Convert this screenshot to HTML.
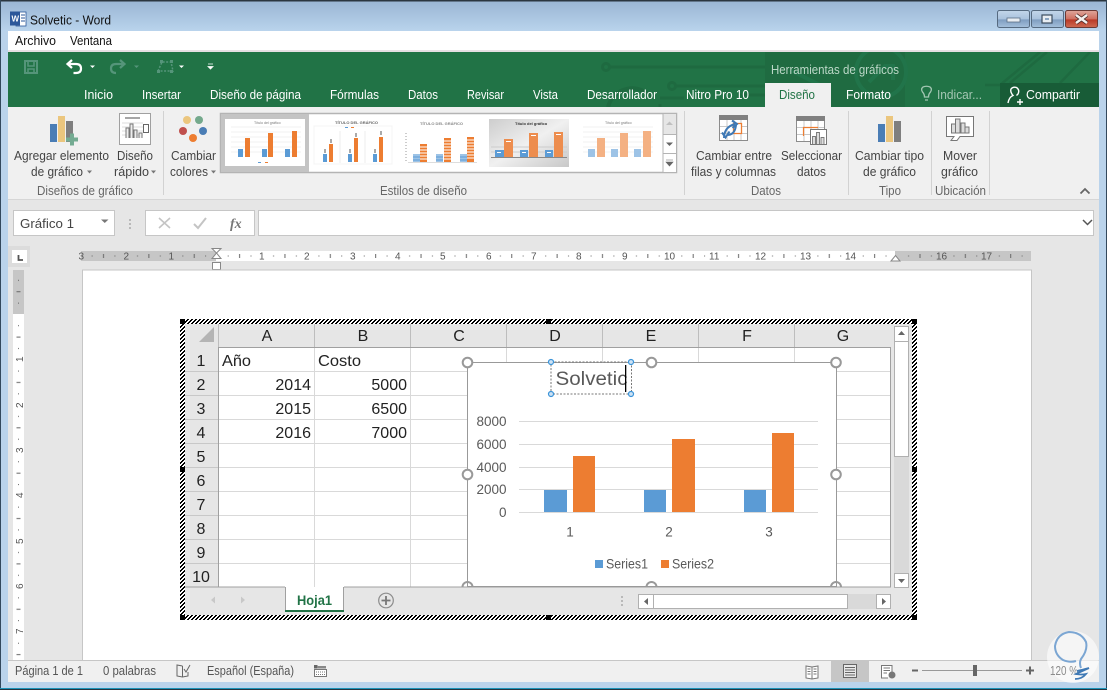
<!DOCTYPE html>
<html><head><meta charset="utf-8"><title>Solvetic - Word</title>
<style>
html,body{margin:0;padding:0;width:1107px;height:690px;overflow:hidden;background:#fff}
svg{display:block;font-family:"Liberation Sans",sans-serif}
text{font-size:12.5px;fill:#444}
.w text,text.w{fill:#fff}
.c{font-size:16px;fill:#222}
.a{font-size:13.5px;fill:#595959}
.g{fill:#666}
.t{font-size:3.6px;fill:#777}
.r{font-size:10px;fill:#555}
</style></head><body>
<svg width="1107" height="690" viewBox="0 0 1107 690" xmlns="http://www.w3.org/2000/svg">
<defs>
<linearGradient id="tb" x1="0" y1="0" x2="0" y2="1"><stop offset="0" stop-color="#99b5d3"/><stop offset="1" stop-color="#b9d3ec"/></linearGradient>
<linearGradient id="btn" x1="0" y1="0" x2="0" y2="1"><stop offset="0" stop-color="#c3d6ea"/><stop offset=".5" stop-color="#a9c2dd"/><stop offset=".55" stop-color="#7f9dc0"/><stop offset="1" stop-color="#a5c0dc"/></linearGradient>
<linearGradient id="cl" x1="0" y1="0" x2="0" y2="1"><stop offset="0" stop-color="#dfa79c"/><stop offset=".5" stop-color="#cf6f60"/><stop offset=".55" stop-color="#b93a27"/><stop offset="1" stop-color="#cf6b52"/></linearGradient>
<linearGradient id="th4" x1="0" y1="0" x2="1" y2="1"><stop offset="0" stop-color="#cdcdcd"/><stop offset=".5" stop-color="#f0f0f0"/><stop offset="1" stop-color="#c8c8c8"/></linearGradient>
<clipPath id="gc"><rect x="8" y="52" width="1091" height="55"/></clipPath>
<pattern id="h" width="4" height="4" patternUnits="userSpaceOnUse"><rect width="4" height="4" fill="#fff"/><path d="M2 0h2v1h-2zM1 1h2v1h-2zM0 2h2v1h-2zM3 3h1v1h-1zM0 3h1v1h-1z" fill="#000"/></pattern>
<pattern id="rh" x="216.5" y="251" width="45.36" height="10" patternUnits="userSpaceOnUse"><rect x="11.2" y="4.5" width="1" height="1" fill="#666"/><rect x="34" y="4.5" width="1" height="1" fill="#666"/><rect x="22.6" y="3" width="1" height="4" fill="#666"/></pattern>
<pattern id="rv" x="13" y="314" width="11" height="45.36" patternUnits="userSpaceOnUse"><rect x="5" y="11.2" width="1" height="1" fill="#666"/><rect x="5" y="34" width="1" height="1" fill="#666"/><rect x="3.5" y="22.6" width="4" height="1" fill="#666"/></pattern>
<g id="mini"><rect x="0" y="0" width="80" height="47" fill="#fff"/><path d="M6 8H76M6 13H76M6 18H76M6 23H76M6 28H76M6 33H76" stroke="#eee" stroke-width=".7"/></g>
</defs>

<!-- frame -->
<rect width="1107" height="690" fill="#bad3eb"/>
<rect width="1107" height="31" fill="url(#tb)"/>
<rect width="1107" height="1.5" fill="#2b3640"/>
<rect x="0" y="0" width="1" height="690" fill="#33485c"/>
<rect x="1106" y="0" width="1" height="690" fill="#33485c"/>
<rect x="0" y="688" width="1107" height="1" fill="#1b93b8"/>
<rect x="0" y="689" width="1107" height="1" fill="#26343f"/>
<rect x="8" y="31" width="1091" height="20" fill="#fff"/>
<rect x="8" y="50" width="1091" height="2" fill="#e6dfe3"/>

<!-- title -->
<rect x="16" y="12" width="10" height="14" fill="#fff" stroke="#2b579a" stroke-width=".8"/>
<rect x="10" y="11.5" width="10" height="14" fill="#2b579a"/>
<text x="11.5" y="21.5" style="font-size:8px;font-weight:bold;fill:#fff">W</text>
<path d="M21 15H25M21 18H25M21 21H25" stroke="#2b579a"/>
<text x="30" y="24.5" textLength="81" lengthAdjust="spacingAndGlyphs" style="fill:#111">Solvetic - Word</text>
<rect x="997.5" y="10.5" width="32" height="17" rx="2" fill="url(#btn)" stroke="#566a80"/>
<rect x="1007" y="18" width="13" height="4" fill="#e8edf2" stroke="#5a6e85" stroke-width=".8"/>
<rect x="1031.5" y="10.5" width="32" height="17" rx="2" fill="url(#btn)" stroke="#566a80"/>
<rect x="1042" y="15" width="10" height="8" fill="#e8edf2" stroke="#3d4e60" stroke-width="1.2"/><rect x="1045" y="18" width="4" height="2" fill="#8aa5c2"/>
<rect x="1065.5" y="10.5" width="32" height="17" rx="2" fill="url(#cl)" stroke="#6b3a35"/>
<path d="M1076 15L1087 23M1087 15L1076 23" stroke="#4a2a28" stroke-width="4"/><path d="M1076 15L1087 23M1087 15L1076 23" stroke="#f4f0ee" stroke-width="2.4"/>
<text x="15" y="45" textLength="41" lengthAdjust="spacingAndGlyphs" style="fill:#111">Archivo</text>
<text x="70" y="45" textLength="42" lengthAdjust="spacingAndGlyphs" style="fill:#111">Ventana</text>

<!-- green ribbon head -->
<rect x="8" y="52" width="1091" height="55" fill="#217346"/>
<g fill="none" stroke="#1e6a40" stroke-width="3" clip-path="url(#gc)">
<circle cx="606" cy="67" r="3.5"/><path d="M610 67H765"/>
<circle cx="672" cy="86" r="3.5"/><path d="M676 86H765"/>
<path d="M608 107A25 25 0 0 1 652 98" stroke-width="4"/>
<path d="M660 98H684M660 107V104" stroke-width="3"/>
<path d="M738 95H765"/>
<path d="M985 85H1000L1040 52M1010 83L1047 52M1060 83L1090 52" stroke-width="2.5"/>
</g>
<rect x="765" y="52" width="140" height="55" fill="#1f6b41"/>
<g fill="none" stroke="#21744a" stroke-width="4" clip-path="url(#gc)"><circle cx="881" cy="72" r="25"/><path d="M869 82L885 66H893V80"/><path d="M790 70L830 90"/></g>
<rect x="1000" y="83" width="99" height="24" fill="#185c37"/>
<!-- qat -->
<g fill="none" stroke="#55957a" stroke-width="2"><rect x="25" y="61" width="12" height="12"/><path d="M28 61V66H34V61M28 73V69H34V73" stroke-width="1.6"/></g>
<path d="M72 60L67.500 64L72 68M68 64H76Q81 64 81 68.500Q81 73 76 73H73.500" fill="none" stroke="#fff" stroke-width="2.200"/>
<path d="M90 65.500H95L92.500 68Z" fill="#fff"/>
<path d="M120 60L124.500 64L120 68M124 64H116Q111 64 111 68.500Q111 73 116 73" fill="none" stroke="#55957a" stroke-width="2.200"/>
<path d="M134 65.500H139L136.500 68Z" fill="#55957a"/>
<path d="M158 71L162 62H171L173 71Z" fill="none" stroke="#55957a" stroke-width="1.500" stroke-dasharray="2 1.500"/>
<path d="M160 60h3v3h-3zM170 60h3v3h-3zM157 70h3v3h-3zM170 70h3v3h-3z" fill="#55957a"/>
<path d="M179 65.500H184L181.500 68Z" fill="#fff"/>
<path d="M208 64H213M208 66.500H213L210.500 69Z" fill="#fff" stroke="#fff" stroke-width=".8"/>
<g class="w">
<text x="84" y="99" textLength="29" lengthAdjust="spacingAndGlyphs">Inicio</text>
<text x="142" y="99" textLength="39" lengthAdjust="spacingAndGlyphs">Insertar</text>
<text x="210" y="99" textLength="91" lengthAdjust="spacingAndGlyphs">Diseño de página</text>
<text x="330" y="99" textLength="49" lengthAdjust="spacingAndGlyphs">Fórmulas</text>
<text x="408" y="99" textLength="30" lengthAdjust="spacingAndGlyphs">Datos</text>
<text x="467" y="99" textLength="37" lengthAdjust="spacingAndGlyphs">Revisar</text>
<text x="533" y="99" textLength="25" lengthAdjust="spacingAndGlyphs">Vista</text>
<text x="587" y="99" textLength="70" lengthAdjust="spacingAndGlyphs">Desarrollador</text>
<text x="686" y="99" textLength="63" lengthAdjust="spacingAndGlyphs">Nitro Pro 10</text>
<text x="846" y="99" textLength="45" lengthAdjust="spacingAndGlyphs">Formato</text>
<text x="1026" y="99" textLength="54" lengthAdjust="spacingAndGlyphs">Compartir</text>
</g>
<text x="771" y="74" textLength="128" lengthAdjust="spacingAndGlyphs" style="fill:#bcd8c8">Herramientas de gráficos</text>
<text x="937" y="99" textLength="45" lengthAdjust="spacingAndGlyphs" style="fill:#a3c6b2">Indicar...</text>
<path d="M924.500 97Q924.500 94 922.500 92Q920.500 89 923 87Q926.500 85.500 930 87Q932.500 89 930.500 92Q928.500 94 928.500 97ZM925 100H928" fill="none" stroke="#a3c6b2" stroke-width="1.300"/>
<path d="M1008 103Q1009 97 1013 95.500Q1010 92 1011 89Q1013 86.500 1016.500 87.500Q1020 90 1018 94L1016.500 95.500M1017 102H1023M1020 99V105" fill="none" stroke="#fff" stroke-width="1.400"/>
<rect x="765" y="83" width="66" height="24" fill="#f0f0f0"/>
<text x="779" y="99" textLength="36" lengthAdjust="spacingAndGlyphs" style="fill:#217346">Diseño</text>

<!-- ribbon body -->
<rect x="8" y="107" width="1091" height="92" fill="#f0f0f0"/>
<rect x="8" y="199" width="1091" height="1" fill="#d6d6d6"/>
<rect x="8" y="200" width="1091" height="460" fill="#e6e6e6"/>
<path d="M163.500 111V195M684.500 111V195M848.500 111V195M931.500 111V195M989.500 111V195" stroke="#d2d2d2"/>
<!-- agregar icon -->
<rect x="50" y="124" width="7" height="18" fill="#4a7db5"/><rect x="58" y="116" width="7" height="26" fill="#ebc67e"/><rect x="66" y="121" width="7" height="21" fill="#7f7f7f"/>
<path d="M66 139.500H78M72 133.500V145.500" stroke="#74ab92" stroke-width="4"/>
<!-- diseno rapido -->
<rect x="119.500" y="113.500" width="31" height="31" fill="#fff" stroke="#a0a0a0"/>
<rect x="125" y="117" width="15" height="2" fill="#a6a6a6"/>
<path d="M122 123H143M122 127H143M122 131H143M122 135H143" stroke="#ddd"/>
<path d="M126 138V128H129V138M130 138V124H133V138M134 138V130H137V138M139 138V133H142V138" fill="#eee" stroke="#777"/>
<rect x="143.500" y="124.500" width="5" height="8" fill="#fff" stroke="#666"/>
<!-- colors -->
<circle cx="187" cy="120" r="4" fill="#ebc67e"/><circle cx="199" cy="120" r="4" fill="#74a98c"/><circle cx="183" cy="131" r="4" fill="#c0504d"/><circle cx="203" cy="131" r="4" fill="#4a7db5"/><circle cx="193" cy="138" r="4" fill="#ed7d31"/>
<text x="14" y="160" textLength="95" lengthAdjust="spacingAndGlyphs">Agregar elemento</text>
<text x="31" y="176" textLength="52" lengthAdjust="spacingAndGlyphs">de gráfico</text><path d="M87 170.500H92L89.500 173.500Z" fill="#777"/>
<text x="117" y="160" textLength="36" lengthAdjust="spacingAndGlyphs">Diseño</text>
<text x="114" y="176" textLength="35" lengthAdjust="spacingAndGlyphs">rápido</text><path d="M151 170.500H156L153.500 173.500Z" fill="#777"/>
<text x="171" y="160" textLength="45" lengthAdjust="spacingAndGlyphs">Cambiar</text>
<text x="170" y="176" textLength="38" lengthAdjust="spacingAndGlyphs">colores</text><path d="M211 170.500H216L213.500 173.500Z" fill="#777"/>
<text class="g" x="37" y="195" textLength="96" lengthAdjust="spacingAndGlyphs">Diseños de gráfico</text>
<text class="g" x="380" y="195" textLength="87" lengthAdjust="spacingAndGlyphs">Estilos de diseño</text>
<text class="g" x="751" y="195" textLength="30" lengthAdjust="spacingAndGlyphs">Datos</text>
<text class="g" x="879" y="195" textLength="22" lengthAdjust="spacingAndGlyphs">Tipo</text>
<text class="g" x="935" y="195" textLength="51" lengthAdjust="spacingAndGlyphs">Ubicación</text>
<path d="M1080.500 193.500L1085 189L1089.500 193.500" fill="none" stroke="#666" stroke-width="1.800"/>

<!-- gallery -->
<rect x="220.500" y="113.500" width="456" height="59" fill="#fff" stroke="#b4b4b4" stroke-width="1.500"/>
<rect x="221" y="114" width="88" height="58" fill="#c4c4c4"/>
<g transform="translate(225,119)"><use href="#mini"/><text class="t" x="29" y="5">Título del gráfico</text>
<rect x="13" y="30" width="5" height="8" fill="#5b9bd5"/><rect x="20" y="19" width="5" height="19" fill="#ed7d31"/><rect x="37" y="30" width="5" height="8" fill="#5b9bd5"/><rect x="43" y="14" width="5" height="24" fill="#ed7d31"/><rect x="60" y="30" width="5" height="8" fill="#5b9bd5"/><rect x="67" y="12" width="5" height="26" fill="#ed7d31"/>
<rect x="33" y="43" width="3" height="1" fill="#5b9bd5"/><rect x="40" y="43" width="3" height="1" fill="#ed7d31"/></g>
<!-- thumb 2 -->
<g transform="translate(313,119)"><rect x="1" y="7" width="78" height="38" fill="#fff" stroke="#f4f4f4"/><text x="22" y="5" style="font-size:4px;font-weight:bold;fill:#666">TÍTULO DEL GRÁFICO</text>
<path d="M32 8h3v1h-3z" fill="#5b9bd5"/><path d="M38 8h3v1h-3z" fill="#ed7d31"/>
<path d="M27 12V44M52 12V44" stroke="#eee"/>
<rect x="10" y="35" width="4" height="8" fill="#5b9bd5"/><rect x="16" y="25" width="4" height="18" fill="#ed7d31"/><rect x="35" y="35" width="4" height="8" fill="#5b9bd5"/><rect x="41" y="19" width="4" height="24" fill="#ed7d31"/><rect x="60" y="35" width="4" height="8" fill="#5b9bd5"/><rect x="66" y="18" width="4" height="25" fill="#ed7d31"/>
<rect x="11" y="30" width="2" height="4" fill="#aaa"/><rect x="36" y="30" width="2" height="4" fill="#aaa"/><rect x="61" y="30" width="2" height="4" fill="#aaa"/><rect x="17" y="20" width="2" height="4" fill="#aaa"/><rect x="42" y="14" width="2" height="4" fill="#aaa"/><rect x="67" y="12" width="2" height="4" fill="#aaa"/></g>
<!-- thumb 3 -->
<g transform="translate(401,119)"><rect x="1" width="78" height="47" fill="#fff"/><text x="19" y="6" style="font-size:4px;font-weight:bold;fill:#888">TÍTULO DEL GRÁFICO</text>
<path d="M5 14v28" stroke="#999" stroke-dasharray="1 2"/><path d="M7 43.500H76" stroke="#ddd"/>
<rect x="12" y="35" width="7" height="8" fill="#9dc3e6"/><rect x="19" y="25" width="7" height="18" fill="#ed7d31"/><rect x="35" y="35" width="7" height="8" fill="#9dc3e6"/><rect x="43" y="19" width="7" height="24" fill="#ed7d31"/><rect x="59" y="35" width="7" height="8" fill="#9dc3e6"/><rect x="66" y="18" width="7" height="25" fill="#ed7d31"/>
<path d="M12 38h7M12 41h7M35 38h7M35 41h7M59 38h7M59 41h7" stroke="#5b9bd5" stroke-width=".9"/>
<path d="M19 28h7M19 31h7M19 34h7M19 37h7M19 40h7M43 22h7M43 25h7M43 28h7M43 31h7M43 34h7M43 37h7M43 40h7M66 21h7M66 24h7M66 27h7M66 30h7M66 33h7M66 36h7M66 39h7" stroke="#fff" stroke-width=".9"/>
</g>
<!-- thumb 4 -->
<g transform="translate(489,119)"><rect width="80" height="48" fill="url(#th4)"/><text x="26" y="6" style="font-size:4px;font-weight:bold;fill:#333">Título del gráfico</text>
<path d="M2 28H78M2 33H78" stroke="#ccc"/><path d="M2 38.500H78" stroke="#888"/>
<rect x="6" y="31" width="9" height="7" fill="#5b9bd5"/><rect x="15" y="20" width="9" height="18" fill="#ed8d4e"/><rect x="31" y="31" width="8" height="7" fill="#5b9bd5"/><rect x="40" y="14" width="9" height="24" fill="#ed8d4e"/><rect x="56" y="31" width="8" height="7" fill="#5b9bd5"/><rect x="65" y="13" width="9" height="25" fill="#ed8d4e"/>
<path d="M8 33.500h4M17 22.500h5M42 16.500h5M67 15.500h5M33 33.500h4M58 33.500h4" stroke="#fff"/></g>
<!-- thumb 5 -->
<g transform="translate(577,119)"><use href="#mini"/><text class="t" x="28" y="5">Título del gráfico</text>
<rect x="11" y="30" width="7" height="8" fill="#9dc3e6"/><rect x="20" y="19" width="8" height="19" fill="#f4b183"/><rect x="34" y="30" width="7" height="8" fill="#9dc3e6"/><rect x="43" y="14" width="8" height="24" fill="#f4b183"/><rect x="57" y="30" width="7" height="8" fill="#9dc3e6"/><rect x="66" y="12" width="8" height="26" fill="#f4b183"/></g>
<rect x="663" y="113.500" width="13.500" height="21" fill="#e6e6e6" stroke="#b4b4b4"/><rect x="663" y="134.500" width="13.500" height="19" fill="#fff" stroke="#b4b4b4"/><rect x="663" y="153.500" width="13.500" height="19" fill="#fff" stroke="#b4b4b4"/>
<path d="M666 125H673L669.500 121.500Z" fill="#c0c0c0"/><path d="M666 142.500H673L669.500 146Z" fill="#666"/><path d="M666 160H673M666 162H673L669.500 166Z" fill="#666" stroke="#666" stroke-width=".6"/>

<!-- datos icons -->
<rect x="719.500" y="115.500" width="28" height="25" fill="#fff" stroke="#8c8c8c"/><rect x="719" y="115" width="29" height="5" fill="#808080"/>
<path d="M720 126.500H747M720 133.500H747M727 120V140M734 120V140M741 120V140" stroke="#c8c8c8"/>
<path d="M733.500 123.500H741.500V133.500H733.500Z" fill="#fff" stroke="#ed7d31" stroke-width="1.300"/>
<path d="M724 138Q724 127 735 124M732 120.500L737 124L732.500 128M736 125Q735 135 727 135M729.500 131.500L725.500 137.500L722 132.500" fill="none" stroke="#3f79b5" stroke-width="2"/>
<rect x="796.500" y="116.500" width="28" height="25" fill="#fff" stroke="#8c8c8c"/><rect x="796" y="116" width="29" height="5" fill="#808080"/>
<path d="M797 127.500H824M797 134.500H824M804 121V141M811 121V141M818 121V141" stroke="#c8c8c8"/><path d="M803.500 136V127.500H818" fill="none" stroke="#ed7d31" stroke-width="1.200"/>
<rect x="810.500" y="129.500" width="16" height="15" fill="#fff" stroke="#777"/><path d="M812.500 144V136.500H815.500V144M816.500 144V132.500H819.500V144M821 144V137.500H824V144" fill="#ddd" stroke="#777" stroke-width=".9"/>
<text x="696" y="160" textLength="76" lengthAdjust="spacingAndGlyphs">Cambiar entre</text>
<text x="691" y="176" textLength="85" lengthAdjust="spacingAndGlyphs">filas y columnas</text>
<text x="781" y="160" textLength="61" lengthAdjust="spacingAndGlyphs">Seleccionar</text>
<text x="797" y="176" textLength="29" lengthAdjust="spacingAndGlyphs">datos</text>
<rect x="878" y="124" width="7" height="18" fill="#4a7db5"/><rect x="886" y="116" width="7" height="26" fill="#ebc67e"/><rect x="894" y="121" width="7" height="21" fill="#7f7f7f"/>
<text x="855" y="160" textLength="69" lengthAdjust="spacingAndGlyphs">Cambiar tipo</text>
<text x="863" y="176" textLength="53" lengthAdjust="spacingAndGlyphs">de gráfico</text>
<path d="M946.500 116.500H973.500V136.500H960L957 140.500H951L954 136.500H946.500Z" fill="#fff" stroke="#777"/>
<path d="M951.500 133V124H955.500V133ZM955.500 133V119H960V133ZM961 133V123H965V133ZM965 133V127H969V133Z" fill="#ddd" stroke="#777"/>
<text x="943" y="160" textLength="34" lengthAdjust="spacingAndGlyphs">Mover</text>
<text x="941" y="176" textLength="37" lengthAdjust="spacingAndGlyphs">gráfico</text>

<!-- formula bar -->
<rect x="13.500" y="210.500" width="101" height="25" fill="#fff" stroke="#c6c6c6"/>
<text x="20" y="228" textLength="54" lengthAdjust="spacingAndGlyphs">Gráfico 1</text>
<path d="M101 219.500H108.500L104.750 223Z" fill="#777"/>
<path d="M130 219v2M130 223v2M130 227v2" stroke="#aaa" stroke-width="1.500"/>
<rect x="145.500" y="210.500" width="109" height="25" fill="#fff" stroke="#c6c6c6"/>
<path d="M159 218L170 228M170 218L159 228" stroke="#c4c4c4" stroke-width="1.600"/>
<path d="M194 224L198 228L206 218" fill="none" stroke="#c4c4c4" stroke-width="2"/>
<text x="230" y="228" style="font-family:'Liberation Serif',serif;font-style:italic;font-weight:bold;font-size:14px;fill:#777">fx</text>
<rect x="258.500" y="210.500" width="835" height="25" fill="#fff" stroke="#c6c6c6"/>
<path d="M1083 220L1087.500 224.500L1092 220" fill="none" stroke="#555" stroke-width="1.500"/>

<!-- rulers -->
<rect x="8" y="246" width="22" height="21" fill="#dcdcdc"/><rect x="12" y="250" width="15" height="13" fill="#fff"/><path d="M18.500 255V260H23" fill="none" stroke="#555" stroke-width="1.800"/>
<rect x="81" y="251" width="135" height="10" fill="#c6c6c6"/><rect x="216" y="251" width="679" height="10" fill="#fff"/><rect x="895" y="251" width="136" height="10" fill="#c6c6c6"/>
<rect x="81" y="251" width="950" height="10" fill="url(#rh)"/>
<g>
<text class="r" x="78.500" y="259.500">3</text><text class="r" x="123.500" y="259.500">2</text><text class="r" x="168.500" y="259.500">1</text>
<text class="r" x="259" y="259.500">1</text><text class="r" x="304" y="259.500">2</text><text class="r" x="350" y="259.500">3</text><text class="r" x="395" y="259.500">4</text><text class="r" x="440" y="259.500">5</text><text class="r" x="486" y="259.500">6</text><text class="r" x="531" y="259.500">7</text><text class="r" x="576" y="259.500">8</text><text class="r" x="622" y="259.500">9</text><text class="r" x="664" y="259.500">10</text><text class="r" x="709" y="259.500">11</text><text class="r" x="755" y="259.500">12</text><text class="r" x="800" y="259.500">13</text><text class="r" x="845" y="259.500">14</text><text class="r" x="936" y="259.500">16</text><text class="r" x="981" y="259.500">17</text>
</g>
<path d="M212 248.500H221L216.500 253L221 258.500H212L216.500 253Z" fill="#fff" stroke="#888"/><rect x="212.500" y="262.500" width="8" height="7" fill="#fff" stroke="#888"/>
<path d="M891 261L895.500 255.500L900 261Z" fill="#fff" stroke="#888"/>
<rect x="13" y="270" width="11" height="44" fill="#c6c6c6"/><rect x="13" y="314" width="11" height="346" fill="#fff"/>
<rect x="13" y="268" width="11" height="392" fill="url(#rv)"/>
<g>
<text class="r" transform="translate(23,362) rotate(-90)">1</text><text class="r" transform="translate(23,408) rotate(-90)">2</text><text class="r" transform="translate(23,453) rotate(-90)">3</text><text class="r" transform="translate(23,498) rotate(-90)">4</text><text class="r" transform="translate(23,544) rotate(-90)">5</text><text class="r" transform="translate(23,589) rotate(-90)">6</text><text class="r" transform="translate(23,634) rotate(-90)">7</text>
</g>

<!-- page -->
<rect x="82.500" y="270" width="949" height="391" fill="#fff" stroke="#c6c6c6"/>

<!-- object frame -->
<rect x="180" y="319" width="737" height="301" fill="url(#h)"/>
<rect x="185" y="324" width="727" height="291" fill="#e6e6e6"/>
<path d="M180 319h5v5h-5zM546 319h5v5h-5zM912 319h5v5h-5zM180 467h5v5h-5zM912 467h5v5h-5zM180 615h5v5h-5zM546 615h5v5h-5zM912 615h5v5h-5z" fill="#000"/>

<!-- sheet -->
<rect x="218" y="347" width="672" height="240" fill="#fff"/>
<path d="M199 342L214 327V342Z" fill="#b4b4b4"/>
<path d="M218.500 324V347M314.500 324V347M410.500 324V347M506.500 324V347M602.500 324V347M698.500 324V347M794.500 324V347" stroke="#bdbdbd"/>
<path d="M218 371.500H890M218 395.500H890M218 419.500H890M218 443.500H890M218 467.500H890M218 491.500H890M218 515.500H890M218 539.500H890M218 563.500H890M314.500 347V587M410.500 347V587M506.500 347V587M602.500 347V587M698.500 347V587M794.500 347V587" stroke="#d9d9d9"/>
<path d="M185 371.500H218M185 395.500H218M185 419.500H218M185 443.500H218M185 467.500H218M185 491.500H218M185 515.500H218M185 539.500H218M185 563.500H218" stroke="#c8c8c8"/>
<path d="M218.500 347V587M218 347.500H890.500V587M185 587H285M344 587H891" fill="none" stroke="#a0a0a0" stroke-width="1"/>
<g text-anchor="middle">
<text class="c" x="267" y="341">A</text><text class="c" x="363" y="341">B</text><text class="c" x="459" y="341">C</text><text class="c" x="555" y="341">D</text><text class="c" x="651" y="341">E</text><text class="c" x="747" y="341">F</text><text class="c" x="843" y="341">G</text>
<text class="c" x="201" y="366">1</text><text class="c" x="201" y="390">2</text><text class="c" x="201" y="414">3</text><text class="c" x="201" y="438">4</text><text class="c" x="201" y="462">5</text><text class="c" x="201" y="486">6</text><text class="c" x="201" y="510">7</text><text class="c" x="201" y="534">8</text><text class="c" x="201" y="558">9</text><text class="c" x="201" y="582">10</text>
</g>
<text class="c" x="222" y="366" textLength="29" lengthAdjust="spacingAndGlyphs">Año</text>
<text class="c" x="318" y="366" textLength="43" lengthAdjust="spacingAndGlyphs">Costo</text>
<g text-anchor="end">
<text class="c" x="311" y="390">2014</text><text class="c" x="311" y="414">2015</text><text class="c" x="311" y="438">2016</text>
<text class="c" x="407" y="390">5000</text><text class="c" x="407" y="414">6500</text><text class="c" x="407" y="438">7000</text>
</g>

<!-- v scrollbar -->
<rect x="894" y="341" width="15" height="232" fill="#d9d9d9"/>
<rect x="894.500" y="326.500" width="14" height="15" fill="#fff" stroke="#b0b0b0"/>
<rect x="894.500" y="341.500" width="14" height="115" fill="#fff" stroke="#b0b0b0"/>
<rect x="894.500" y="573.500" width="14" height="14" fill="#fff" stroke="#b0b0b0"/>
<path d="M898 335H905L901.500 331Z" fill="#666"/><path d="M898 579H905L901.500 583Z" fill="#666"/>

<!-- tabs -->
<rect x="285" y="587" width="59" height="25" fill="#fff"/>
<path d="M285.500 587V612M343.500 587V612" stroke="#a0a0a0"/>
<rect x="285" y="610" width="59" height="2" fill="#217346"/>
<text x="297" y="605" textLength="35" lengthAdjust="spacingAndGlyphs" style="font-size:14px;font-weight:bold;fill:#217346">Hoja1</text>
<path d="M215 596.500V603.500L211 600Z" fill="#c8c8c8"/><path d="M241 596.500V603.500L245 600Z" fill="#c8c8c8"/>
<circle cx="386" cy="600.500" r="7.300" fill="none" stroke="#8c8c8c" stroke-width="1.200"/><path d="M381.500 600.500H390.500M386 596V605" stroke="#777" stroke-width="1.800"/>
<path d="M622 596v2M622 600v2M622 604v2" stroke="#aaa" stroke-width="1.500"/>
<rect x="653" y="594" width="238" height="15" fill="#d9d9d9"/>
<rect x="638.500" y="594.500" width="15" height="14" fill="#fff" stroke="#b0b0b0"/>
<rect x="653.500" y="594.500" width="194" height="14" fill="#fff" stroke="#b0b0b0"/>
<rect x="876.500" y="594.500" width="14" height="14" fill="#fff" stroke="#b0b0b0"/>
<path d="M648 598V605L644 601.500Z" fill="#666"/><path d="M882 598V605L886 601.500Z" fill="#666"/>

<!-- chart -->
<rect x="467.500" y="362.500" width="369" height="224" fill="#fff" stroke="#999"/>
<path d="M519 421.500H818M519 444.500H818M519 467.500H818M519 489.500H818" stroke="#d9d9d9"/>
<rect x="544" y="490" width="23" height="22" fill="#5b9bd5"/><rect x="573" y="456" width="22" height="56" fill="#ed7d31"/>
<rect x="644" y="490" width="22" height="22" fill="#5b9bd5"/><rect x="672" y="439" width="23" height="73" fill="#ed7d31"/>
<rect x="744" y="490" width="22" height="22" fill="#5b9bd5"/><rect x="772" y="433" width="22" height="79" fill="#ed7d31"/>
<path d="M519 512.500H818" stroke="#d9d9d9"/>
<g text-anchor="end">
<text class="a" x="506.500" y="426">8000</text><text class="a" x="506.500" y="449">6000</text><text class="a" x="506.500" y="472">4000</text><text class="a" x="506.500" y="494">2000</text><text class="a" x="506.500" y="517">0</text>
</g>
<g text-anchor="middle"><text class="a" x="570" y="536.500">1</text><text class="a" x="669" y="536.500">2</text><text class="a" x="769" y="536.500">3</text></g>
<rect x="595" y="560" width="8" height="8" fill="#5b9bd5"/><text class="a" x="606" y="568.500" textLength="42" lengthAdjust="spacingAndGlyphs">Series1</text>
<rect x="661" y="560" width="8" height="8" fill="#ed7d31"/><text class="a" x="672" y="568.500" textLength="42" lengthAdjust="spacingAndGlyphs">Series2</text>
<rect x="551" y="362" width="80.500" height="32" fill="none" stroke="#777" stroke-dasharray="2 1.500"/>
<text x="555.500" y="385" textLength="72" lengthAdjust="spacingAndGlyphs" style="font-size:19px;fill:#595959">Solvetic</text>
<rect x="625" y="365" width="1.300" height="27" fill="#000"/>
<g fill="#cfe3f5" stroke="#3b94d8" stroke-width="1.200"><circle cx="551" cy="362" r="2.500"/><circle cx="631" cy="362" r="2.500"/><circle cx="551" cy="394" r="2.500"/><circle cx="631" cy="394" r="2.500"/></g>
<g fill="#fff" stroke="#999" stroke-width="2"><circle cx="467.500" cy="362.500" r="4.800"/><circle cx="651.500" cy="362.500" r="4.800"/><circle cx="836" cy="362.500" r="4.800"/><circle cx="467.500" cy="474.500" r="4.800"/><circle cx="836" cy="474.500" r="4.800"/>
<path d="M462.500 587A5 5 0 0 1 472.500 587M646.500 587A5 5 0 0 1 656.500 587M831 587A5 5 0 0 1 841 587" fill="none"/></g>

<!-- status bar -->
<rect x="8" y="660" width="1091" height="22" fill="#f0f0f0"/>
<rect x="8" y="660" width="1091" height="1" fill="#c6c6c6"/>
<text x="15" y="675" textLength="68" lengthAdjust="spacingAndGlyphs" style="fill:#555">Página 1 de 1</text>
<text x="103" y="675" textLength="53" lengthAdjust="spacingAndGlyphs" style="fill:#555">0 palabras</text>
<path d="M182.500 666L177 665V676L182.500 677L188 676V672M182.500 666V677M184 669L186 672L190 665" fill="none" stroke="#666"/>
<text x="207" y="675" textLength="87" lengthAdjust="spacingAndGlyphs" style="fill:#555">Español (España)</text>
<rect x="314" y="665" width="3.500" height="3.500" fill="#666"/><rect x="317" y="666" width="9" height="2.500" fill="#888"/><rect x="314.500" y="669.500" width="12" height="7" fill="#fff" stroke="#777"/><path d="M316 672H325M316 674.500H325" stroke="#777" stroke-dasharray="1 1"/>
<path d="M812 667L806 666V678L812 679L818 678V666ZM812 667V679M807.500 669H810.500M807.500 671.500H810.500M807.500 674H810.500M813.500 669H816.500M813.500 671.500H816.500M813.500 674H816.500" fill="#fff" stroke="#777"/>
<rect x="831" y="661" width="38" height="21" fill="#c6c6c6"/>
<rect x="843.500" y="664.500" width="13" height="13" fill="#e8e8e8" stroke="#666"/><path d="M845 667.500H855M845 670H855M845 672.500H855M845 675H855" stroke="#666"/>
<path d="M892 672V665.500H881.500V678H888" fill="#fff" stroke="#777"/><path d="M883.500 668H890M883.500 670.500H890M883.500 673H887" stroke="#777"/><circle cx="892" cy="675" r="3.500" fill="#777"/>
<rect x="912" y="669.500" width="6" height="2" fill="#666"/>
<rect x="922" y="670" width="100" height="1" fill="#999"/><rect x="973" y="665" width="4" height="11" fill="#666"/>
<path d="M1026 670.500H1034M1030 666.500V674.500" stroke="#666" stroke-width="2"/>

<!-- watermark -->
<circle cx="1073" cy="657" r="26" fill="#fff" fill-opacity=".6"/>
<text x="1050" y="675" textLength="28" lengthAdjust="spacingAndGlyphs" style="fill:#8c8c8c">120 %</text>
<path d="M1081 668Q1079 663 1081 659Q1088 650 1086 642Q1081 632 1069 632Q1057 634 1055 646Q1055 655 1063 660Q1070 663 1076 661" fill="none" stroke="#7ba6d3" stroke-width="2"/>
<path d="M1077 671Q1082 670 1089 668Q1080 672 1076 674Q1082 675 1086 674Q1082 679 1075 679" fill="none" stroke="#3f79b5" stroke-width="1.800"/>
</svg>
</body></html>
